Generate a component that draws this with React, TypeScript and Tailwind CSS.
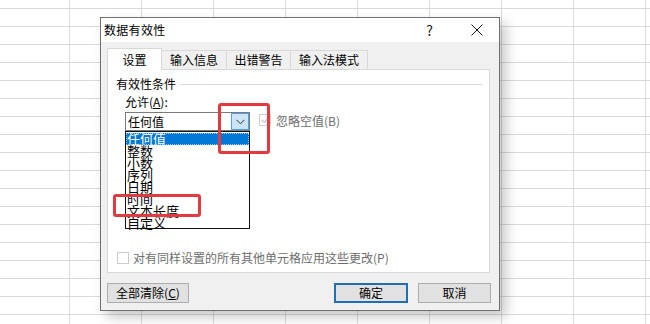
import React from 'react'

const items = ['任何值', '整数', '小数', '序列', '日期', '时间', '文本长度', '自定义']
const tabs = [
  { label: '输入信息', w: 'w-[65px]' },
  { label: '出错警告', w: 'w-[64px]' },
  { label: '输入法模式', w: 'w-[77px]' },
]

function SheetGrid() {
  return (
    <div className="absolute left-[-2px] top-[-9px]">
      {Array.from({ length: 20 }).map((_, r) => (
        <div key={r} className="flex">
          {Array.from({ length: 10 }).map((_, c) => (
            <div key={c} className="w-[72px] h-[18px] border-r border-b border-[#dadada]" />
          ))}
        </div>
      ))}
    </div>
  )
}

function Chevron() {
  return (
    <svg width="9" height="6" viewBox="0 0 9 6" className="block">
      <path d="M0.5 0.8 L4.5 4.8 L8.5 0.8" fill="none" stroke="#333" strokeWidth="1" />
    </svg>
  )
}

function Annotation({ className }: { className: string }) {
  return (
    <div className={`absolute z-30 border-[3px] border-[#e23a3f] rounded-[3px] ${className}`} />
  )
}

export default function App() {
  return (
    <div className="relative w-[650px] h-[324px] overflow-hidden bg-white text-black text-[12px] leading-none [font-family:'Noto_Sans_CJK_SC','Noto_Sans',sans-serif]">
      <SheetGrid />

      {/* dialog */}
      <div className="absolute left-[100px] top-[17px] w-[400px] h-[294px] flex flex-col border border-[#707070] bg-[#f0f0f0] shadow-[6px_6px_12px_rgba(0,0,0,0.22)]">
        {/* title bar */}
        <div className="h-[24px] bg-white flex items-center pl-[3px] shrink-0">
          <span className="text-[12px] tracking-[0.3px]">数据有效性</span>
          <span className="ml-auto mr-[38px] text-[14px] text-[#222]">?</span>
          <svg width="12" height="12" viewBox="0 0 12 12" className="mr-[16px]">
            <path d="M0.5 0.5 L11.5 11.5 M11.5 0.5 L0.5 11.5" stroke="#111" strokeWidth="1" />
          </svg>
        </div>

        <div className="flex-1 flex flex-col pl-[6px] pt-[6px]">
          {/* tabs */}
          <div className="flex items-end h-[21px] relative z-10">
            <div className="w-[55px] h-[22px] mb-[-1px] bg-white border border-b-0 border-[#d9d9d9] flex items-center justify-center text-[12px]">
              设置
            </div>
            {tabs.map((t) => (
              <div
                key={t.label}
                className={`${t.w} h-[19px] border border-l-0 border-b-0 border-[#d9d9d9] bg-[#f0f0f0] flex items-center justify-center text-[12px]`}
              >
                {t.label}
              </div>
            ))}
          </div>

          {/* panel */}
          <div className="w-[383px] h-[204px] bg-white border border-[#d9d9d9] flex flex-col">
            <div className="flex items-center h-[12px] mt-[8px] pl-[8px] pr-[6px]">
              <span>有效性条件</span>
              <div className="flex-1 ml-[4px] border-t border-[#dcdcdc]" />
            </div>

            <div className="pl-[17px] mt-[6px] h-[12px] flex items-center">
              允许(<span className="underline">A</span>):
            </div>

            <div className="flex items-start pl-[17px] mt-[4px]">
              <div className="relative w-[125px] h-[19px] border border-[#7a7a7a] bg-white flex items-center">
                <span className="pl-[2px] text-[12px]">任何值</span>
                <div className="ml-auto mr-0 w-[18px] h-[17px] bg-[#cce4f7] border border-[#569de5] flex items-center justify-center">
                  <Chevron />
                </div>

                {/* open list */}
                <div className="absolute left-[-1px] top-[18px] w-[125px] h-[98px] bg-white border border-[#111] pt-[1px] z-20">
                  {items.map((it, i) => (
                    <div
                      key={it}
                      className={`h-[12px] leading-[12px] pl-[1px] text-[13px] ${
                        i === 0
                          ? 'bg-[#0078d7] text-white outline-1 outline-dotted outline-[#9cc9f0] -outline-offset-1'
                          : 'text-black'
                      }`}
                    >
                      {it}
                    </div>
                  ))}
                </div>
              </div>

              <div className="ml-[9px] mt-[2px] w-[12px] h-[12px] border border-[#cfcfcf] flex items-center justify-center">
                <svg width="9" height="8" viewBox="0 0 9 8">
                  <path d="M0.8 4 L3.3 6.5 L8.2 1" fill="none" stroke="#c4c4c4" strokeWidth="1.2" />
                </svg>
              </div>
              <span className="ml-[5px] mt-[3px] text-[#6d6d6d]">忽略空值(B)</span>
            </div>

            <div className="mt-auto mb-[8px] flex items-center pl-[9px]">
              <div className="w-[12px] h-[12px] border border-[#cccccc] bg-white" />
              <span className="ml-[4px] text-[#6d6d6d]">对有同样设置的所有其他单元格应用这些更改(P)</span>
            </div>
          </div>

          {/* buttons */}
          <div className="flex mt-[10px] h-[20px]">
            <button className="w-[82px] h-[20px] bg-[#e1e1e1] border border-[#adadad] text-[12px] leading-none flex items-center justify-center">
              全部清除(<span className="underline">C</span>)
            </button>
            <button className="ml-[145px] w-[74px] h-[20px] bg-[#e1e1e1] border-2 border-[#1f6fb5] text-[12px] leading-none flex items-center justify-center">
              确定
            </button>
            <button className="ml-[10px] w-[73px] h-[20px] bg-[#e1e1e1] border border-[#adadad] text-[12px] leading-none flex items-center justify-center">
              取消
            </button>
          </div>
        </div>
      </div>

      <Annotation className="left-[218px] top-[103px] w-[52px] h-[51px]" />
      <Annotation className="left-[113px] top-[194px] w-[88px] h-[23px]" />
    </div>
  )
}
